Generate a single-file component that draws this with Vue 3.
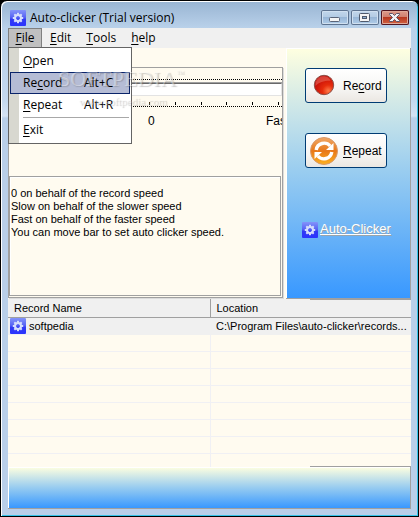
<script setup>
import { ref } from 'vue'

const speed = ref(0)
const ticks = [0, 1, 2, 3, 4, 5, 6, 7, 8, 9, 10]
const gear = Array.from({ length: 8 }, (_, i) => i * 45)
</script>

<template>
  <div class="window">
    <header class="titlebar">
      <svg class="app-icon" viewBox="0 0 16 16" aria-hidden="true">
        <defs>
          <linearGradient id="gearBg" x1="0" y1="0" x2="0" y2="1">
            <stop offset="0" stop-color="#8494fa" />
            <stop offset=".45" stop-color="#5864f4" />
            <stop offset=".6" stop-color="#3038f4" />
            <stop offset="1" stop-color="#2a34ff" />
          </linearGradient>
          <g id="gear">
            <rect width="16" height="16" rx="1" fill="url(#gearBg)" />
            <rect v-for="a in gear" :key="a" x="7" y="2.8" width="2" height="3" fill="#d6defc" :transform="`rotate(${a} 8 8)`" />
            <circle cx="8" cy="8" r="3" fill="none" stroke="#d6defc" stroke-width="2" />
          </g>
        </defs>
        <use href="#gear" />
      </svg>
      <h1>Auto-clicker (Trial version)</h1>
      <div class="caption-buttons">
        <button type="button" aria-label="Minimize">
          <svg viewBox="0 0 28 15"><rect x="8.500" y="7.500" width="10" height="4" rx="1" fill="#f4f4f4" stroke="#5a6478" /></svg>
        </button>
        <button type="button" aria-label="Maximize">
          <svg viewBox="0 0 28 15">
            <rect x="8.500" y="3.500" width="10" height="8" rx="1" fill="#f4f4f4" stroke="#505a6c" />
            <rect x="11.500" y="6.500" width="4" height="2" fill="#8fb0d4" stroke="#505a6c" />
          </svg>
        </button>
        <button type="button" class="close" aria-label="Close">
          <svg viewBox="0 0 28 15">
            <path d="M8.500 3.500h3l2 2 2-2h3v1l-3 3 3 3v1h-3l-2-2-2 2h-3v-1l3-3-3-3z" fill="#f2f2f6" stroke="#5d5468" />
          </svg>
        </button>
      </div>
    </header>

    <div class="client">
      <nav class="menubar">
        <div class="menu-root">
          <button type="button" class="top active"><u>F</u>ile</button>
          <div class="popup">
            <button type="button"><span><u>O</u>pen</span></button>
            <button type="button" class="selected"><span>Re<u>c</u>ord</span><span class="key">Alt+C</span></button>
            <button type="button"><span><u>R</u>epeat</span><span class="key">Alt+R</span></button>
            <hr />
            <button type="button"><span><u>E</u>xit</span></button>
          </div>
        </div>
        <button type="button" class="top"><u>E</u>dit</button>
        <button type="button" class="top"><u>T</u>ools</button>
        <button type="button" class="top"><u>h</u>elp</button>
      </nav>

      <main class="upper">
        <section class="left">
          <div class="frame">
            <div class="dots"></div>
            <input v-model="speed" class="slider" type="range" min="0" max="10" aria-label="Speed" />
            <div class="ticks"><i v-for="t in ticks" :key="t"></i></div>
            <div class="labels"><span>0</span><span class="fast">Fast</span></div>
            <p class="note">
              0 on behalf of the record speed<br />
              Slow on behalf of the slower speed<br />
              Fast on behalf of the faster speed<br />
              You can move bar to set auto clicker speed.
            </p>
          </div>
        </section>
        <aside class="right">
          <button type="button" class="big">
            <svg viewBox="0 0 28 28" aria-hidden="true">
              <defs>
                <radialGradient id="redBall" cx=".72" cy=".8" r=".75">
                  <stop offset="0" stop-color="#ff7a48" />
                  <stop offset=".4" stop-color="#e62c0c" />
                  <stop offset="1" stop-color="#c40c08" />
                </radialGradient>
              </defs>
              <circle cx="14" cy="13" r="9.700" fill="url(#redBall)" stroke="#8c5048" />
              <path d="M5.500 14C5 8 9 4.500 13 4.200c5 0 7 2.400 7.600 4.600C15 8.500 9 10 5.500 14z" fill="#f08878" opacity=".45" />
            </svg>
            <span>Re<u>c</u>ord</span>
          </button>
          <button type="button" class="big">
            <svg viewBox="0 0 28 28" aria-hidden="true">
              <defs>
                <linearGradient id="orangeBall" x1="0" y1="0" x2="0" y2="1">
                  <stop offset="0" stop-color="#f0a868" />
                  <stop offset=".5" stop-color="#e87818" />
                  <stop offset="1" stop-color="#fcb020" />
                </linearGradient>
              </defs>
              <circle cx="14" cy="14" r="13.500" fill="url(#orangeBall)" stroke="#d89868" />
              <g fill="none" stroke="#fff" stroke-width="3.400">
                <path d="M6.200 13a8 8 0 0 1 14-4" />
                <path d="M21.800 15a8 8 0 0 1-14 4" />
              </g>
              <path d="M23.500 6v7h-7.500z" fill="#fff" />
              <path d="M4.500 22v-7H12z" fill="#fff" />
            </svg>
            <span><u>R</u>epeat</span>
          </button>
          <a class="site" href="#">
            <svg class="app-icon" viewBox="0 0 16 16" aria-hidden="true"><use href="#gear" /></svg>
            <span>Auto-Clicker</span>
          </a>
        </aside>
      </main>

      <section class="list">
        <table>
          <thead>
            <tr><th>Record Name</th><th>Location</th></tr>
          </thead>
          <tbody>
            <tr>
              <td>
                <div class="cell">
                  <svg class="app-icon" viewBox="0 0 16 16" aria-hidden="true"><use href="#gear" /></svg>softpedia
                </div>
              </td>
              <td>C:\Program Files\auto-clicker\records...</td>
            </tr>
          </tbody>
        </table>
        <div class="empty"></div>
      </section>
      <footer class="status"></footer>
    </div>

    <div class="watermark">
      <div class="brand">SOFTPEDIA<sup>™</sup></div>
      <div class="url">www.softpedia.com</div>
    </div>
  </div>
</template>

<style>
body {
  background: #000;
}
</style>

<style scoped>
* {
  box-sizing: border-box;
}
.window {
  position: relative;
  display: flex;
  flex-direction: column;
  min-height: 100vh;
  padding: 1px 6px 7px;
  border: 1px solid #000;
  border-radius: 7px 7px 0 0;
  background: linear-gradient(#98b4d2, #b9d1ea 27px, #c4d8ee 100px, #d4e2f3 115px, #b9cfe9 117px);
  box-shadow: inset 1px 1px #fff, inset -1px -1px #35c3e8;
  font: 12px/16px "Open Sans", sans-serif;
  color: #000;
}
button {
  margin: 0;
  padding: 0;
  border: 0;
  background: none;
  font: inherit;
  color: inherit;
}
u {
  text-underline-offset: 2px;
}
.app-icon {
  display: block;
  flex: none;
  width: 16px;
  height: 16px;
}
.titlebar {
  display: flex;
  align-items: center;
  gap: 4px;
  height: 26px;
  padding: 5px 3px 0;
}
h1 {
  flex: 1;
  margin: 0;
  font-size: 12px;
  font-weight: 400;
  line-height: 16px;
}
.caption-buttons {
  display: flex;
  gap: 2px;
}
.caption-buttons button {
  width: 28px;
  height: 15px;
  border-radius: 2px;
  background: linear-gradient(#c4d8ec, #b4cce4 45%, #98b6d6 50%, #b4d0ec);
  box-shadow: inset 0 0 0 1px #5d7390, inset 0 0 0 2px #d0e0f0;
}
.caption-buttons .close {
  background: linear-gradient(#e0a090, #d08070 45%, #b83820 50%, #d46848);
  box-shadow: inset 0 0 0 1px #501420, inset 0 0 0 2px #e0a898;
}
.caption-buttons svg {
  display: block;
  width: 28px;
  height: 15px;
}
.client {
  display: flex;
  flex: 1;
  flex-direction: column;
  margin: 0 1px;
  background: #fffbf0;
}
.menubar {
  display: flex;
  height: 20px;
  background: #f0f0f0;
}
.top {
  height: 20px;
  padding: 0 6px 0 7px;
  border: 1px solid transparent;
  line-height: 18px;
}
.top.active {
  width: 34px;
  padding: 0;
  border-color: #808080;
  background: #c0c0c0;
}
.menu-root {
  position: relative;
}
.popup {
  position: absolute;
  z-index: 2;
  top: 19px;
  left: 0;
  width: 124px;
  padding: 2px 1px 2px 1px;
  border: 1px solid #646464;
  background: linear-gradient(90deg, #d8d8d0 10px, #fff 10px);
}
.popup button {
  display: flex;
  align-items: center;
  width: 100%;
  height: 22px;
  padding: 0 0 0 12px;
  border: 1px solid transparent;
  text-align: left;
}
.popup button span:first-child {
  width: 61px;
}
.popup .selected {
  border-color: #0a246a;
  background: #b5bcd5;
}
.popup hr {
  height: 1px;
  margin: 1px 1px 1px 13px;
  border: 0;
  background: #a8a8a8;
}
.upper {
  display: flex;
  height: 251px;
}
.left {
  display: flex;
  flex: 1;
  min-width: 0;
  padding: 19px 3px 1px 0;
}
.frame {
  display: flex;
  flex: 1;
  flex-direction: column;
  min-width: 0;
  overflow: hidden;
  border: 1px solid #a0a0a0;
  box-shadow: 1px 1px #dcdcdc;
}
.dots {
  height: 12px;
  background: repeating-linear-gradient(90deg, #000 0 1px, transparent 1px 2px) bottom / 100% 1px no-repeat;
}
.slider {
  appearance: none;
  width: 100%;
  height: 13px;
  margin: 3px 0 0;
  border: 1px solid #e3e3e3;
  border-top: 1px solid #696969;
  background: #fff;
  box-shadow: 0 -1px #a0a0a0;
}
.slider::-webkit-slider-thumb {
  appearance: none;
  width: 11px;
  height: 11px;
  background: #f0f0f0;
}
.ticks {
  display: flex;
  justify-content: space-between;
  height: 5px;
  margin-top: 6px;
  padding: 0 3px 0 11px;
  background: repeating-linear-gradient(90deg, #000 0 1px, transparent 1px 2px) bottom / 100% 1px no-repeat;
}
.ticks i {
  width: 1px;
  height: 3px;
  background: #000;
}
.labels {
  display: grid;
  grid-template-columns: 118px 1fr;
  height: 69px;
  padding: 6px 0 0 139px;
  font-size: 12px;
}
.fast {
  width: 24px;
}
.note {
  flex: 1;
  margin: 0 1px 1px 0;
  padding: 10px 1px 0;
  border: 1px solid #a0a0a0;
  box-shadow: inset 1px 1px #fff;
  line-height: 13px;
}
.frame,
.list {
  font-family: "Liberation Sans", sans-serif;
  font-size: 11px;
}
.right {
  display: flex;
  flex-direction: column;
  align-items: flex-start;
  width: 125px;
  padding: 20px 0 0 18px;
  border: 1px solid #a0a0a0;
  border-width: 0 1px 1px 0;
  background: linear-gradient(#ffffe0, #98ccf0 50%, #3898ff);
  box-shadow: inset 1px 1px #fff;
}
.big {
  display: flex;
  align-items: center;
  width: 82px;
  height: 35px;
  margin: 0 0 30px 1px;
  padding-left: 4px;
  border: 1px solid #003c74;
  border-radius: 3px;
  background: linear-gradient(#fff, #f6f5f3 60%, #ebe7e2);
  font: 12px/16px "Liberation Sans", sans-serif;
}
.big svg {
  flex: none;
  width: 28px;
  height: 28px;
  margin-right: 5px;
}
.site {
  display: flex;
  align-items: flex-end;
  gap: 2px;
  margin-top: 22px;
  margin-left: -2px;
  color: #fff;
  font: 13px/18px "Liberation Sans", sans-serif;
  text-shadow: 1px 1px #98a4ac;
}
.list {
  display: flex;
  flex: 1;
  flex-direction: column;
  min-height: 168px;
}
table {
  width: 100%;
  border-collapse: collapse;
  table-layout: fixed;
  background: #f0f0f0;
}
th {
  height: 18px;
  padding: 0 0 0 6px;
  border: 1px solid #a0a0a0;
  border-width: 0 0 1px;
  font-weight: 400;
  text-align: left;
  line-height: 16px;
}
th:first-child {
  width: 202px;
  border-right-width: 1px;
}
th:last-child {
  background: linear-gradient(#a0a0a0, #a0a0a0) top right / 101px 1px no-repeat;
}
td {
  height: 18px;
  padding: 0 0 0 6px;
  line-height: 17px;
  white-space: nowrap;
}
td:first-child {
  padding-left: 2px;
}
.cell {
  display: flex;
  gap: 3px;
}
.empty {
  flex: 1;
  background:
    linear-gradient(#a0a0a0, #a0a0a0) bottom right / 101px 1px no-repeat,
    linear-gradient(#f0f0f4, #f0f0f4) 202px 0 / 1px 100% no-repeat,
    repeating-linear-gradient(transparent 0 16px, #f0f0f4 16px 17px);
}
.status {
  height: 42px;
  border: 1px solid #a0a0a0;
  border-width: 0 1px 1px 0;
  background: linear-gradient(#ffffe0, #98ccf0 50%, #3898ff);
  box-shadow: inset 1px 1px #fff;
}
.watermark {
  position: absolute;
  z-index: 3;
  top: 66px;
  left: 57px;
  color: rgba(255, 255, 255, 0.4);
  text-shadow: 1px 1px 1px rgba(90, 90, 90, 0.3);
  pointer-events: none;
}
.brand {
  font: 22px/24px "Liberation Serif", serif;
}
.brand sup {
  font-size: 8px;
  line-height: 8px;
  vertical-align: 10px;
}
.url {
  padding-left: 21px;
  font: 11px/20px "Liberation Serif", serif;
}
</style>
